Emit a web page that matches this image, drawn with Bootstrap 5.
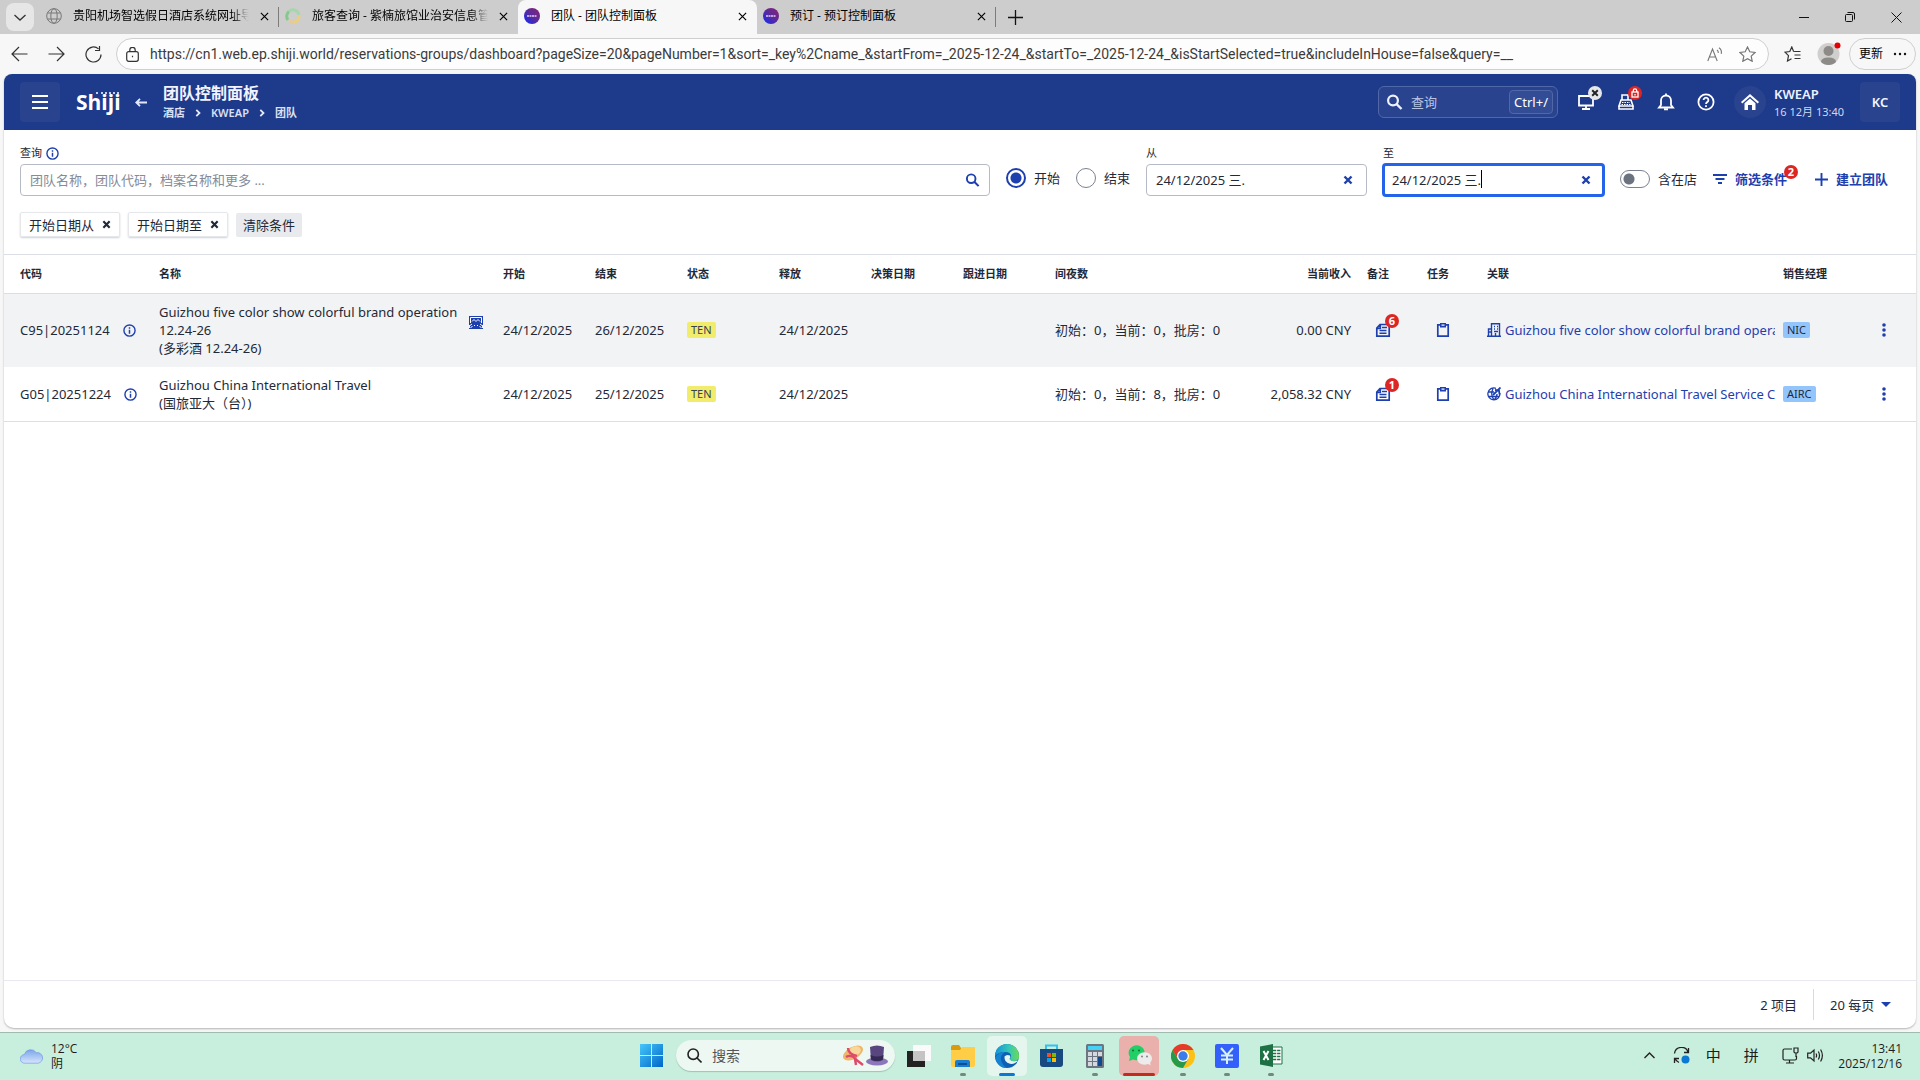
<!DOCTYPE html>
<html lang="zh-CN">
<head>
<meta charset="utf-8">
<meta name="viewport" content="width=device-width, initial-scale=1">
<title>团队 - 团队控制面板</title>
<link href="https://cdn.jsdelivr.net/npm/bootstrap@5.3.0/dist/css/bootstrap.min.css" rel="stylesheet">
<style>
:root{--navy:#1e3a8a;--blue:#1e40af;--ink:#1f2937;--line:#dcdee5;--alert:#dc2626}
body{font:13px/18px "Noto Sans","Noto Sans CJK SC",sans-serif;color:var(--ink);background:#f7f7f7}
button{font:inherit}
svg{display:block;flex:none}
.plain{background:none;border:0;padding:0;color:inherit}
.cjk{font-family:"Open Sans","Noto Sans CJK SC",sans-serif}

/* browser chrome */
.tabstrip{height:34px;background:#cdcdcd;font-size:12px;color:#000}
.tab-list-btn{width:28px;height:28px;border-radius:8px;background:#e6e6e6;margin:3px 6px 3px 6px}
.btab{width:239px;padding:0 10px 2px 6px;gap:11px;position:relative}
.btab.ruled::after{content:"";position:absolute;right:0;top:7px;height:20px;border-right:1px solid #7c7c7c}
.btab.current{background:#f7f7f7;border-radius:8px 8px 0 0}
.btab a{color:#000;text-decoration:none;overflow:hidden;white-space:nowrap}
.btab.faded a{-webkit-mask-image:linear-gradient(90deg,#000 90%,transparent);mask-image:linear-gradient(90deg,#000 90%,transparent)}
.winbtns{gap:36px;padding-right:18px}
.toolbar{height:40px;padding:4px 4px 4px 11px}
.navbtns{gap:20px;width:105px}
.address{height:32px;border:1px solid #cfcfcf;border-radius:16px;background:#fdfdfd;padding:0 8px 0 5px}
.address input{border:0;outline:0;background:none;color:#3b3b3b;font:14px/20px Roboto,"Noto Sans CJK SC",sans-serif;padding:0 0 0 11px}
.toolside{padding-left:15px}
.update{height:32px;width:67px;border:1px solid #cfcfcf;border-radius:16px;padding:0 8px 0 9px;font-size:12px;color:#000}

/* application */
.appframe{margin:0 4px 4px;border-radius:8px 8px 10px 10px;background:#fff;box-shadow:0 1px 2px #b4b4b4;overflow:hidden}
.topbar{height:56px;background:var(--navy);color:#eef2ff;padding:0 16px}
.sq{width:40px;height:40px;border-radius:4px;background:#29438f;border:0;color:#f3f5ff;font-weight:600}
.brand{font:700 21px/24px "Open Sans",sans-serif;color:#fff;text-decoration:none;margin-left:16px;width:59px;position:relative}
.brand::after{content:"";position:absolute;left:20px;top:2px;width:23px;border-top:2px dotted #c4cdea}
.page-title{font-size:16px;line-height:20px;font-weight:700;color:#f1f4ff;margin:0}
.crumbs{font-size:11px;line-height:16px;font-weight:600;gap:10px;margin-top:2px}
.crumbs a{color:#d9e0f5;text-decoration:none}
.quick{width:180px;height:32px;border:1px solid #5068a8;border-radius:6px;background:#29438f;padding:0 4px 0 7px;gap:8px}
.quick input{background:none;border:0;outline:0;color:#fff;min-width:0;padding:0}
.quick input::placeholder{color:#b9c4e2}
.quick kbd{font:inherit;background:#334c96;border:1px solid #5068a8;border-radius:4px;padding:2px 4px;line-height:18px}
.tools{gap:20px;margin-left:18px}
.tools button{width:20px;height:20px}
.pip{position:absolute;left:12px;top:-6px;width:14px;height:14px;border-radius:50%;background:var(--alert);color:#fff;font:700 11px/14px "Noto Sans",sans-serif;text-align:center}
.pip.grey{background:#e5e7eb;color:#222}
.pip.on-note{left:10px;top:-8px}
.pip.on-filter{left:71px;top:1px}
.house{width:32px;height:32px;border-radius:50%;background:#29438f;margin:0 8px 0 18px}
.site{width:86px;padding-top:2px}
.site-time{font-size:11px;line-height:18px;color:#cfd8f0}

.filters{padding:14px 16px 0;gap:16px}
.lbl{font-size:11px;line-height:18px;display:flex;align-items:center;gap:4px;margin:0 0 2px}
.field{height:32px;border:1px solid #b6bac5;border-radius:4px;padding:0 9px;background:#fff}
.field input{border:0;outline:0;background:none;min-width:0;padding:0;color:var(--ink)}
.field input::placeholder{color:#858b98}
.date .field{width:221px}
.date .field.active{border:3px solid #2563eb;margin:-1px;width:223px;height:34px;padding:0 7px}
.caret{position:absolute;left:96px;top:4px;height:18px;border-left:1px solid #000}
.ctl{height:32px;padding-bottom:2px}
.ctl .form-check-input{width:20px;height:20px;margin:0;border:1px solid #7b8190;background-image:none;box-shadow:none}
.ctl .form-check-input:checked{border:2px solid var(--blue);background:radial-gradient(circle,var(--blue) 5px,#fff 6px)}
.ctl .form-check-input[role=switch]{width:30px;height:18px;border-radius:9px;background:radial-gradient(circle at 8px 8px,#6b7280 5px,transparent 6px)}
.linkbtn{color:var(--blue);font-weight:600;gap:8px}
.create{margin:0 12px}
.chips{padding:16px;gap:8px;height:58px}
.chip{height:25px;border:1px solid #e6e7eb;box-shadow:0 1px 2px #cfd1d6;border-radius:2px;padding:0 8px;gap:8px}
.chip-clear{height:24px;background:#e8eaee;border:0;border-radius:2px;padding:0 7px;margin-top:1px;color:var(--ink)}

.groups{table-layout:fixed;width:100%;border-top:1px solid var(--line)}
.c-code{width:147px}.c-date{width:92px}.c-nights{width:182px}.c-rev{width:122px}.c-icon{width:60px}.c-rel{width:304px}.c-mgr{width:83px}.c-menu{width:58px}
.groups th{height:39px;font-size:11px;font-weight:600;padding:0 0 0 8px;border-bottom:1px solid var(--line);white-space:nowrap}
.groups td{padding:9px 0 9px 8px;vertical-align:middle}
.groups th:first-child,.groups td:first-child{padding-left:16px}
.groups th.wide,.groups td.wide{padding-left:16px}
.groups td.icon{padding-left:24px}
.groups th.num,.groups td.num{padding-right:0;text-align:right}
.groups .shade td{background:#f2f3f5}
.groups tbody tr:last-child td{border-bottom:1px solid var(--line)}
.groups tbody tr.shade td{padding-bottom:10px}
.groups a{color:var(--blue);text-decoration:none}
.icon a{display:block;position:relative;width:16px}
.code{gap:13px}
.tag{display:block;width:max-content;font-size:11px;line-height:16px;padding:0 4px;border-radius:2px;color:#374151;background:#f1ec6c}
.tag.sky{background:#93c5fd;color:#1f2937}
.flagcell{padding-right:12px}
.blue{color:var(--blue)}
.pager{height:48px;border-top:1px solid #e8e8ee;padding:0 25px 0 0}
.pager .rule{height:31px;border-left:1px solid #d8dae2;margin:0 16px}
.pager select{appearance:none;border:0;background:none;padding:0;color:var(--ink);width:51px}

/* desktop bar */
.taskbar{height:48px;background:#c8eedd;border-top:1px solid #9fbcb0;font-size:12px;line-height:15px;color:#1c1c1c;padding-bottom:2px}
.wing{flex:1 1 0}
.tsearch{width:219px;height:31px;border-radius:16px;background:#edf8f3;box-shadow:0 1px 1px #9ec4b3;padding:0 6px 0 11px;gap:10px;margin:0 0 0 1px}
.tsearch input{background:none;border:0;outline:0;font-size:14px;min-width:0;color:#444;padding:0}
.tsearch input::placeholder{color:#555}
.app{width:40px;height:40px;border-radius:5px;position:relative}
.app.on{background:#e4f6ee}
.app.call{background:#e9b0ac}
.app.run::after{content:"";position:absolute;bottom:0;left:17px;width:6px;height:3px;border-radius:2px;background:#73887f}
.app.on::after{left:12px;width:16px;background:#0a78d4}
.app.call::after{left:4px;width:32px;background:#c42b1c}
.tray{padding-right:18px;gap:14px}
.ime{font-size:15px;width:18px;text-align:center}
</style>
<script src="https://cdn.jsdelivr.net/npm/bootstrap@5.3.0/dist/js/bootstrap.bundle.min.js"></script>
</head>
<body class="d-flex flex-column vh-100 overflow-hidden">
<svg width="0" height="0" class="position-absolute" aria-hidden="true">
  <defs>
    <linearGradient id="fav" x1="0" y1="1" x2="1" y2="0"><stop offset="0" stop-color="#0b2bff"/><stop offset=".5" stop-color="#5a2a9c"/><stop offset="1" stop-color="#8a2270"/></linearGradient>
    <linearGradient id="win" x1="0" y1="0" x2="1" y2="1"><stop offset="0" stop-color="#45c6fb"/><stop offset="1" stop-color="#0067c8"/></linearGradient>
    <linearGradient id="cloud" x1="0" y1="0" x2="0" y2="1"><stop offset="0" stop-color="#7da5ea"/><stop offset="1" stop-color="#d6e5fc"/></linearGradient>
    <linearGradient id="edgeg" x1="0" y1="0" x2="1" y2="0"><stop offset="0" stop-color="#1593d8"/><stop offset=".6" stop-color="#36c9b4"/><stop offset="1" stop-color="#6ddb51"/></linearGradient>
    <symbol id="x" viewBox="0 0 10 10"><path d="M1 1l8 8M9 1L1 9" fill="none" stroke="currentColor" stroke-width="1.300"/></symbol>
    <symbol id="xb" viewBox="0 0 10 10"><path d="M1.500 1.500l7 7M8.500 1.500l-7 7" fill="none" stroke="currentColor" stroke-width="2.400"/></symbol>
    <symbol id="info" viewBox="0 0 14 14"><circle cx="7" cy="7" r="6" fill="none" stroke="currentColor" stroke-width="1.500"/><path d="M6.200 3.400h1.600v1.600H6.200zM6.200 6.100h1.600v4.500H6.200z" fill="currentColor"/></symbol>
    <symbol id="lens" viewBox="0 0 16 16"><circle cx="6.500" cy="6.500" r="4.900" fill="none" stroke="currentColor" stroke-width="2.200"/><path d="M10 10l5 5" stroke="currentColor" stroke-width="2.400"/></symbol>
    <symbol id="favicon" viewBox="0 0 16 16"><circle cx="8" cy="8" r="8" fill="url(#fav)"/><path d="M3 8h10" stroke="#e9c9ee" stroke-width="1.400" stroke-dasharray="2 .5"/></symbol>
    <symbol id="note" viewBox="0 0 16 16"><path d="M5 2.500h9.200v11.700H1.800V6zM5.300 2.500v3.800H1.800" fill="none" stroke="currentColor" stroke-width="1.700"/><path d="M7 5.500h5M4.500 8.500h7M4.500 11.300h7" stroke="currentColor" stroke-width="1.400"/></symbol>
    <symbol id="clip" viewBox="0 0 14 16"><path d="M1.800 2.800h10.400v11.400H1.800z" fill="none" stroke="currentColor" stroke-width="1.700"/><path d="M4 1h6v4.500H4z" fill="currentColor"/><path d="M5.500 2.500h3v1.200h-3z" fill="#fff"/></symbol>
    <symbol id="dots" viewBox="0 0 4 14"><g fill="currentColor"><circle cx="2" cy="2" r="1.800"/><circle cx="2" cy="7" r="1.800"/><circle cx="2" cy="12" r="1.800"/></g></symbol>
  </defs>
</svg>

<nav class="tabstrip d-flex flex-shrink-0 cjk" aria-label="tabs">
  <button class="plain tab-list-btn d-flex align-items-center justify-content-center" aria-label="tabs"><svg width="14" height="14" viewBox="0 0 14 14" fill="none" stroke="#333" stroke-width="1.300"><path d="M1.500 5L7 10l5.500-5"/></svg></button>
  <div class="btab ruled faded d-flex align-items-center">
    <svg width="16" height="16" viewBox="0 0 16 16" fill="none" stroke="#777"><circle cx="8" cy="8" r="7.300"/><ellipse cx="8" cy="8" rx="3.200" ry="7.300"/><path d="M1.500 5h13M1.500 11h13"/></svg>
    <a href="#" class="flex-grow-1">贵阳机场智选假日酒店系统网址导</a>
    <button class="plain" aria-label="close"><svg width="9" height="9"><use href="#x"/></svg></button>
  </div>
  <div class="btab faded d-flex align-items-center">
    <svg width="16" height="16" viewBox="0 0 16 16" fill="none" stroke-width="3"><path d="M3 12A6 6 0 0 1 4 3.500" stroke="#86c98b"/><path d="M4 3.500A6 6 0 0 1 14 7" stroke="#a5d6ae"/><path d="M14 7A6 6 0 0 1 9 14" stroke="#e9cf7e"/><path d="M9 14A6 6 0 0 1 4 12.500" stroke="#ecc898"/></svg>
    <a href="#" class="flex-grow-1">旅客查询 - 紫楠旅馆业治安信息管</a>
    <button class="plain" aria-label="close"><svg width="9" height="9"><use href="#x"/></svg></button>
  </div>
  <div class="btab current d-flex align-items-center">
    <svg width="16" height="16"><use href="#favicon"/></svg>
    <a href="#" class="flex-grow-1">团队 - 团队控制面板</a>
    <button class="plain" aria-label="close"><svg width="9" height="9"><use href="#x"/></svg></button>
  </div>
  <div class="btab ruled d-flex align-items-center">
    <svg width="16" height="16"><use href="#favicon"/></svg>
    <a href="#" class="flex-grow-1">预订 - 预订控制面板</a>
    <button class="plain" aria-label="close"><svg width="9" height="9"><use href="#x"/></svg></button>
  </div>
  <button class="plain px-2 ms-1" aria-label="new tab"><svg width="15" height="15" viewBox="0 0 15 15" stroke="#111" stroke-width="1.300"><path d="M7.500 0v15M0 7.500h15"/></svg></button>
  <div class="winbtns d-flex align-items-center ms-auto">
    <button class="plain" aria-label="minimize"><svg width="10" height="10" stroke="#111"><path d="M0 5.500h10"/></svg></button>
    <button class="plain" aria-label="restore"><svg width="10" height="10" viewBox="0 0 10 10" fill="none" stroke="#111"><rect x=".5" y="2.500" width="7" height="7" rx="1"/><path d="M2.500.5H8A1.500 1.500 0 0 1 9.500 2v5.500"/></svg></button>
    <button class="plain" aria-label="close"><svg width="11" height="11" viewBox="0 0 11 11" stroke="#111"><path d="M.5.500l10 10M10.500.500l-10 10"/></svg></button>
  </div>
</nav>

<div class="toolbar d-flex align-items-center flex-shrink-0">
  <div class="navbtns d-flex align-items-center flex-shrink-0">
    <button class="plain" aria-label="back"><svg width="17" height="16" viewBox="0 0 17 16" fill="none" stroke="#333" stroke-width="1.200"><path d="M16.500 8H1M8 1L1 8l7 7"/></svg></button>
    <button class="plain" aria-label="forward"><svg width="17" height="16" viewBox="0 0 17 16" fill="none" stroke="#333" stroke-width="1.200"><path d="M.5 8H16M9 1l7 7-7 7"/></svg></button>
    <button class="plain" aria-label="reload"><svg width="17" height="17" viewBox="0 0 17 17" fill="none" stroke="#333" stroke-width="1.200"><path d="M16 8.500a7.500 7.500 0 1 1-2.500-5.600M14.500 0v4.500H10"/></svg></button>
  </div>
  <div class="address d-flex align-items-center flex-grow-1">
    <svg class="ms-1" width="13" height="15" viewBox="0 0 13 15" fill="none" stroke="#333" stroke-width="1.200"><rect x=".7" y="4.700" width="11.600" height="9.600" rx="2"/><path d="M3.800 4.500V3a2.700 2.700 0 0 1 5.400 0v1.500M6.500 8.700v1.600"/></svg>
    <input class="flex-grow-1" aria-label="address" value="https://cn1.web.ep.shiji.world/reservations-groups/dashboard?pageSize=20&amp;pageNumber=1&amp;sort=_key%2Cname_&amp;startFrom=_2025-12-24_&amp;startTo=_2025-12-24_&amp;isStartSelected=true&amp;includeInHouse=false&amp;query=__">
    <button class="plain me-3" aria-label="read aloud"><svg width="16" height="15" viewBox="0 0 16 15" fill="none" stroke="#777" stroke-width="1.100"><path d="M.8 14L5.500 2l4.700 12M2.400 10h6.300M10 3q1.500 1 1.300 3M12 .8q3 2.200 2.300 6"/></svg></button>
    <button class="plain me-1" aria-label="favourite"><svg width="17" height="16" viewBox="0 0 17 16" fill="none" stroke="#777" stroke-width="1.200"><path d="M8.500 1l2.300 4.800 5.200.7-3.800 3.600 1 5.200-4.700-2.500-4.700 2.500 1-5.200L1 6.500l5.200-.7z"/></svg></button>
  </div>
  <div class="toolside d-flex align-items-center flex-shrink-0">
    <button class="plain me-3" aria-label="favourites"><svg width="17" height="16" viewBox="0 0 17 16" fill="none" stroke="#333" stroke-width="1.200"><path d="M11 5.500L9.500 5.300 7.800 1 5.800 5.500 1 6.200l3.500 3.500-1 5.300 4-2.300M11 5.500h5.500M10.500 9H16.500M10.500 12.500h6"/></svg></button>
    <button class="plain me-2" aria-label="profile"><svg width="24" height="24" viewBox="0 0 24 24"><circle cx="11.500" cy="12" r="11" fill="#d0cfcd"/><circle cx="11.500" cy="9" r="5" fill="#8d8b88"/><path d="M4 20q0-4.500 7.500-4.500T19 20q-3 3-7.500 3T4 20" fill="#8d8b88"/><circle cx="20.500" cy="3.500" r="3" fill="#e60000"/></svg></button>
    <button class="plain update d-flex align-items-center justify-content-between cjk">更新<svg width="14" height="4" viewBox="0 0 14 4" fill="#111"><circle cx="2" cy="2" r="1.200"/><circle cx="7" cy="2" r="1.200"/><circle cx="12" cy="2" r="1.200"/></svg></button>
  </div>
</div>

<div class="appframe d-flex flex-column flex-grow-1">
  <header class="topbar d-flex align-items-center flex-shrink-0">
    <button class="sq d-flex align-items-center justify-content-center" aria-label="menu"><svg width="16" height="14" viewBox="0 0 16 14" stroke="#fff" stroke-width="2"><path d="M0 1h16M0 7h16M0 13h16"/></svg></button>
    <a href="#" class="brand">Shiji</a>
    <button class="plain me-3" aria-label="back"><svg width="12" height="9" viewBox="0 0 12 9" fill="none" stroke="#e4e9fa" stroke-width="1.800"><path d="M12 4.500H1.500M5 .8L1.300 4.500 5 8.200"/></svg></button>
    <div>
      <h1 class="page-title">团队控制面板</h1>
      <nav class="crumbs d-flex align-items-center">
        <a href="#">酒店</a><svg width="6" height="8" viewBox="0 0 5 8" fill="none" stroke="#e4e9fa" stroke-width="1.800"><path d="M.8.800L4 4 .8 7.200"/></svg>
        <a href="#">KWEAP</a><svg width="6" height="8" viewBox="0 0 5 8" fill="none" stroke="#e4e9fa" stroke-width="1.800"><path d="M.8.800L4 4 .8 7.200"/></svg>
        <a href="#">团队</a>
      </nav>
    </div>
    <div class="quick d-flex align-items-center ms-auto">
      <svg width="17" height="16"><use href="#lens"/></svg>
      <input class="flex-grow-1" aria-label="查询" placeholder="查询"><kbd>Ctrl+/</kbd>
    </div>
    <div class="tools d-flex align-items-center">
      <button class="plain position-relative" aria-label="terminal"><svg width="20" height="20" viewBox="0 0 20 20" fill="none" stroke="#fff" stroke-width="1.800"><path d="M3 4h14v9.500H3zM10 13.500V17M6 17h8"/></svg><span class="pip grey d-flex align-items-center justify-content-center"><svg width="8" height="8"><use href="#xb"/></svg></span></button>
      <button class="plain position-relative" aria-label="cashier"><svg width="20" height="20" viewBox="0 0 20 20" fill="none" stroke="#fff" stroke-width="1.600"><path d="M5 8h10l2 6H3zM6 8V3h6v5M3 14h14v3H3z"/><path d="M6 10.500h8M5.500 12.500h9" stroke-width="1.200" stroke-dasharray="1.500 1"/></svg><span class="pip d-flex align-items-center justify-content-center"><svg width="8" height="10" viewBox="0 0 8 10" fill="none" stroke="#fff" stroke-width="1.300"><rect x="1" y="4" width="6" height="5"/><path d="M2.300 4V2.500a1.700 1.700 0 0 1 3.400 0V4M4 6v1.500"/></svg></span></button>
      <button class="plain" aria-label="notifications"><svg width="20" height="20" viewBox="0 0 20 20" fill="none" stroke="#fff" stroke-width="1.800"><path d="M3 15.500h14L15 13V8.500a5 5 0 0 0-10 0V13zM10 1.500V4"/><path d="M8 17.300h4" stroke-width="2"/></svg></button>
      <button class="plain" aria-label="help"><svg width="20" height="20" viewBox="0 0 20 20" fill="none" stroke="#fff" stroke-width="1.800"><circle cx="10" cy="10" r="7.600"/><path d="M7.600 8a2.400 2.400 0 1 1 3.600 2.100Q10 10.800 10 12"/><path d="M10 13.200V15"/></svg></button>
    </div>
    <div class="house d-flex align-items-center justify-content-center"><svg width="18" height="17" viewBox="0 0 18 17" fill="#fff"><path d="M9 0l9 8-1.300 1.500L9 2.800 1.300 9.500 0 8zM3.500 9.300L9 4.500l5.500 4.800V16H11v-5H7v5H3.500z"/></svg></div>
    <div class="site"><div class="fw-semibold">KWEAP</div><div class="site-time">16 12月 13:40</div></div>
    <button class="sq">KC</button>
  </header>

  <form class="filters d-flex align-items-end flex-shrink-0">
    <div class="flex-grow-1">
      <label class="lbl" for="q">查询 <svg class="blue" width="13" height="13"><use href="#info"/></svg></label>
      <div class="field d-flex align-items-center"><input id="q" class="flex-grow-1" placeholder="团队名称，团队代码，档案名称和更多 ..."><svg class="blue" width="15" height="14"><use href="#lens"/></svg></div>
    </div>
    <div class="ctl d-flex align-items-center gap-2 pb-1"><input class="form-check-input" type="radio" name="edge" id="r1" checked><label for="r1">开始</label>
      <input class="form-check-input ms-2" type="radio" name="edge" id="r2"><label for="r2">结束</label></div>
    <div class="date"><label class="lbl" for="d1">从</label>
      <div class="field d-flex align-items-center"><input id="d1" class="flex-grow-1" value="24/12/2025 三."><svg class="blue me-1" width="10" height="10"><use href="#xb"/></svg></div></div>
    <div class="date"><label class="lbl" for="d2">至</label>
      <div class="field active d-flex align-items-center position-relative"><input id="d2" class="flex-grow-1" value="24/12/2025 三."><span class="caret"></span><svg class="blue me-1" width="10" height="10"><use href="#xb"/></svg></div></div>
    <div class="ctl d-flex align-items-center gap-2"><input class="form-check-input" type="checkbox" role="switch" id="s1"><label for="s1">含在店</label></div>
    <button type="button" class="plain ctl linkbtn d-flex align-items-center position-relative"><svg width="14" height="10" viewBox="0 0 14 10" stroke="currentColor" stroke-width="1.800"><path d="M0 1h14M2.500 5h9M5 9h4"/></svg>筛选条件<span class="pip on-filter">2</span></button>
    <button type="button" class="plain ctl linkbtn create d-flex align-items-center"><svg width="13" height="13" viewBox="0 0 13 13" stroke="currentColor" stroke-width="1.900"><path d="M6.500 0v13M0 6.500h13"/></svg>建立团队</button>
  </form>
  <div class="chips d-flex flex-shrink-0">
    <button class="plain chip d-flex align-items-center">开始日期从<svg width="9" height="9"><use href="#xb"/></svg></button>
    <button class="plain chip d-flex align-items-center">开始日期至<svg width="9" height="9"><use href="#xb"/></svg></button>
    <button class="chip-clear">清除条件</button>
  </div>

  <main class="flex-grow-1">
    <table class="groups">
      <colgroup><col class="c-code"><col><col class="c-date" span="6"><col class="c-nights"><col class="c-rev"><col class="c-icon" span="2"><col class="c-rel"><col class="c-mgr"><col class="c-menu"></colgroup>
      <thead><tr><th>代码</th><th>名称</th><th>开始</th><th>结束</th><th>状态</th><th>释放</th><th>决策日期</th><th>跟进日期</th><th>间夜数</th><th class="num">当前收入</th><th class="wide">备注</th><th class="wide">任务</th><th class="wide">关联</th><th>销售经理</th><th></th></tr></thead>
      <tbody>
        <tr class="shade">
          <td><div class="code d-flex align-items-center">C95|20251124 <svg class="blue" width="13" height="13"><use href="#info"/></svg></div></td>
          <td><div class="d-flex align-items-center justify-content-between flagcell"><div>Guizhou five color show colorful brand operation 12.24-26<br>(多彩酒 12.24-26)</div><svg class="blue mb-3" width="14" height="13" viewBox="0 0 14 13"><path d="M0 0h14v9h-1v3h1v1H0v-1h1V9H0z" fill="currentColor"/><path d="M1.500 7V1.500h11V7M3 5.500l2-2 2 2 2-2 2 2" stroke="#fff" fill="none"/><path d="M1 9.500l2-1.500M13 9.500L11 8M1.500 12l2-2M12.500 12l-2-2M5.500 9v1M8.500 9v1" stroke="#fff"/></svg></div></td>
          <td>24/12/2025</td><td>26/12/2025</td><td><span class="tag">TEN</span></td><td>24/12/2025</td><td></td><td></td><td>初始：0，当前：0，批房：0</td><td class="num">0.00 CNY</td>
          <td class="icon"><a href="#" aria-label="备注 6"><svg width="16" height="16"><use href="#note"/></svg><span class="pip on-note">6</span></a></td>
          <td class="icon"><a href="#" aria-label="任务"><svg width="16" height="16"><use href="#clip"/></svg></a></td>
          <td class="wide"><a href="#" class="d-flex align-items-center gap-1"><svg width="14" height="14" viewBox="0 0 14 14" fill="none" stroke="currentColor" stroke-width="1.400"><path d="M0 13.300h14M1.500 13V6H4M4.500 13V.7h8V13M7 3.500h1M10 3.500h1M7 6h1M10 6h1M7 8.500h4M8.500 13v-3M2 9h2"/></svg><span class="text-nowrap overflow-hidden">Guizhou five color show colorful brand opera</span></a></td>
          <td><span class="tag sky">NIC</span></td><td><button class="plain blue px-3 d-block" aria-label="more"><svg width="4" height="14"><use href="#dots"/></svg></button></td>
        </tr>
        <tr>
          <td><div class="code d-flex align-items-center">G05|20251224 <svg class="blue" width="13" height="13"><use href="#info"/></svg></div></td>
          <td>Guizhou China International Travel<br>(国旅亚大（台）)</td>
          <td>24/12/2025</td><td>25/12/2025</td><td><span class="tag">TEN</span></td><td>24/12/2025</td><td></td><td></td><td>初始：0，当前：8，批房：0</td><td class="num">2,058.32 CNY</td>
          <td class="icon"><a href="#" aria-label="备注 1"><svg width="16" height="16"><use href="#note"/></svg><span class="pip on-note">1</span></a></td>
          <td class="icon"><a href="#" aria-label="任务"><svg width="16" height="16"><use href="#clip"/></svg></a></td>
          <td class="wide"><a href="#" class="d-flex align-items-center gap-1"><svg width="14" height="14" viewBox="0 0 14 14" fill="none" stroke="currentColor" stroke-width="1.300"><path d="M9 1.300A6 6 0 1 0 12.800 6M1 5h6M1.500 9.500h10M7 13Q3 8 6 1.500M7 13q3-2.500 3-6"/><path d="M6 8l7.500-7.500M8 3l4 .5.500 4" stroke-width="1.800"/></svg><span class="text-nowrap overflow-hidden">Guizhou China International Travel Service Co</span></a></td>
          <td><span class="tag sky">AIRC</span></td><td><button class="plain blue px-3 d-block" aria-label="more"><svg width="4" height="14"><use href="#dots"/></svg></button></td>
        </tr>
      </tbody>
    </table>
  </main>

  <footer class="pager d-flex align-items-center justify-content-end flex-shrink-0">
    <span>2 项目</span><span class="rule"></span>
    <select aria-label="每页"><option>20 每页</option><option>50 每页</option></select>
    <svg width="10" height="5" viewBox="0 0 10 5"><path d="M0 0h10L5 5z" fill="#1e40af"/></svg>
  </footer>
</div>

<div class="taskbar d-flex align-items-center flex-shrink-0 cjk">
  <div class="wing d-flex align-items-center ps-3">
    <svg class="ms-1 me-2" width="23" height="16" viewBox="0 0 24 16"><path d="M5 15.500A4.500 4.500 0 0 1 4.500 6.500 7 7 0 0 1 17 4.500a5.500 5.500 0 0 1 2 11z" fill="url(#cloud)" stroke="#6d97e6" stroke-width=".7"/></svg>
    <div>12°C<br>阴</div>
  </div>
  <div class="d-flex align-items-center gap-1 ms-1">
    <button class="plain app d-flex align-items-center justify-content-center" aria-label="start"><svg width="23" height="23" viewBox="0 0 23 23" fill="url(#win)"><path d="M0 0h11v11H0zM12 0h11v11H12zM0 12h11v11H0zM12 12h11v11H12z"/></svg></button>
    <div class="tsearch d-flex align-items-center">
      <svg width="15" height="15" viewBox="0 0 15 15" fill="none" stroke="#222" stroke-width="1.600"><circle cx="6.200" cy="6.200" r="5.200"/><path d="M10 10l4.500 4.500"/></svg>
      <input class="flex-grow-1" aria-label="搜索" placeholder="搜索">
      <svg width="48" height="24" viewBox="0 0 48 24"><ellipse cx="12" cy="9" rx="11" ry="6" fill="#eeb669" transform="rotate(-30 12 9)"/><ellipse cx="14" cy="7" rx="6" ry="4.500" fill="#f8d79c" transform="rotate(-20 14 7)"/><path d="M7 4q0 6 9 8M5 13q5-3 10 2M13 14l9 7M14 15l1 6" stroke="#e04a6a" stroke-width="2.400" fill="none"/><ellipse cx="36" cy="17.500" rx="11" ry="4" fill="#8d77bb"/><path d="M29 3q7-3 14 0l-1 13q-6 3-12 0z" fill="#58467f"/><path d="M29.500 11q6.500 3 13 0l-.5 4.500q-6 3-12 0z" fill="#352a55"/></svg>
    </div>
    <button class="plain app d-flex align-items-center justify-content-center" aria-label="task view"><svg width="24" height="22" viewBox="0 0 24 22"><path d="M0 6h18v16H0z" fill="#222"/><path d="M6 0h18v16H6z" fill="#fafafa"/><path d="M6 6h12v10H6z" fill="#c4c4c4"/></svg></button>
    <button class="plain app run d-flex align-items-center justify-content-center" aria-label="files"><svg width="24" height="22" viewBox="0 0 24 22"><path d="M0 2q0-2 2-2h6l2 3v4H0z" fill="#d99a0e"/><path d="M0 5h9l2-3h13v18q0 2-2 2H2q-2 0-2-2z" fill="#ffce46"/><path d="M4 22v-5q0-2 2-2h11q2 0 2 2v5z" fill="#1a7ed0"/><path d="M7 19h9" stroke="#0b4f96" stroke-width="2"/></svg></button>
    <button class="plain app run on d-flex align-items-center justify-content-center" aria-label="edge"><svg width="24" height="24" viewBox="0 0 24 24"><circle cx="12" cy="12" r="12" fill="#0f60b4"/><path d="M0 12A12 12 0 0 1 24 12q0 5-5 5-4 0-4-2 1-1 1-3 0-4-6-4Q3 8 0 12" fill="url(#edgeg)"/><path d="M10 8q-5 3-4 8t6 8q-9 0-12-10Q3 7.500 10 8" fill="#1583d3"/><path d="M9.500 12.500q2-2.500 5.500-1 1 2-.5 3.500 2 3.500 8.500 1.500-3 4-8 3.300Q9 18.500 9.500 12.500" fill="#e4f6ee"/></svg></button>
    <button class="plain app d-flex align-items-center justify-content-center" aria-label="store"><svg width="23" height="23" viewBox="0 0 23 23"><path d="M6 6V1.500h11V6" fill="none" stroke="#35c0ef" stroke-width="2"/><path d="M0 5h23v15q0 3-3 3H3q-3 0-3-3z" fill="#164a80"/><path d="M7 9h4v4H7z" fill="#f25022"/><path d="M12 9h4v4h-4z" fill="#7fba00"/><path d="M7 14h4v4H7z" fill="#00a4ef"/><path d="M12 14h4v4h-4z" fill="#ffb900"/></svg></button>
    <button class="plain app run d-flex align-items-center justify-content-center" aria-label="calculator"><svg width="18" height="24" viewBox="0 0 18 24"><rect width="18" height="24" rx="1.500" fill="#6c7580"/><path d="M2 2h14v4H2z" fill="#43d2f5"/><path d="M2 8h4v4H2zM7 8h4v4H7zM12 8h4v4h-4zM2 13h4v4H2zM7 13h4v4H7zM2 18h4v4H2zM7 18h4v4H7z" fill="#d4d9df"/><path d="M12 13h4v9h-4z" fill="#12488c"/></svg></button>
    <button class="plain app run call d-flex align-items-center justify-content-center" aria-label="wechat"><svg width="25" height="21" viewBox="0 0 25 21"><path d="M2 16l1-4A8 7.500 0 1 1 6 14.500z" fill="#22cf67"/><circle cx="6" cy="5.500" r="1" fill="#136c38"/><circle cx="12" cy="5.500" r="1" fill="#136c38"/><ellipse cx="17.500" cy="13.500" rx="7.500" ry="6.200" fill="#ececec"/><path d="M20 18l3.500 2.500-.5-4.500z" fill="#ececec"/><circle cx="15" cy="11.500" r=".9" fill="#777"/><circle cx="20" cy="11.500" r=".9" fill="#777"/></svg></button>
    <button class="plain app run d-flex align-items-center justify-content-center" aria-label="chrome"><svg width="24" height="24" viewBox="0 0 24 24"><circle cx="12" cy="12" r="12" fill="#fbc116"/><path d="M1.600 6A12 12 0 0 1 22.400 6H12l-5 9z" fill="#e33b2e"/><path d="M1.600 6A12 12 0 0 0 12 24l5.200-9L7 15z" fill="#269a48"/><circle cx="12" cy="12" r="6" fill="#fff"/><circle cx="12" cy="12" r="4.700" fill="#3a7de8"/></svg></button>
    <button class="plain app run d-flex align-items-center justify-content-center" aria-label="finance"><svg width="24" height="24" viewBox="0 0 24 24"><rect width="24" height="24" rx="2" fill="#3360fa"/><path d="M6 4l6 7 6-7M6 11.500h12M6 15.500h12M12 11v9" fill="none" stroke="#d7f0f5" stroke-width="2"/></svg></button>
    <button class="plain app run d-flex align-items-center justify-content-center" aria-label="excel"><svg width="23" height="23" viewBox="0 0 23 23"><path d="M11 3h11v17H11z" fill="#fff" stroke="#1e7145"/><path d="M13 6.500h7.500M13 9.500h7.500M13 12.500h7.500M13 15.500h7.500" stroke="#1e7145" stroke-width="1.500" stroke-dasharray="3.300 .8"/><path d="M0 2.500L13 0v23L0 20.500z" fill="#1e7145"/><path d="M3.500 7l5 9M8.500 7l-5 9" stroke="#fff" stroke-width="2"/></svg></button>
  </div>
  <div class="wing tray d-flex align-items-center justify-content-end">
    <svg class="me-1" width="11" height="7" viewBox="0 0 11 7" fill="none" stroke="#222" stroke-width="1.400"><path d="M.5 6l5-5 5 5"/></svg>
    <svg width="17" height="17" viewBox="0 0 17 17" fill="none" stroke="#222" stroke-width="1.300"><path d="M1.500 6.500A7 7 0 0 1 15 5M15.500 1v4.500H11M6 15.500a7 7 0 0 1-4-4M1.500 16v-4.500H6"/><circle cx="12.500" cy="12.500" r="4" fill="#0a78d4" stroke="none"/></svg>
    <div class="d-flex gap-3 pe-2"><span class="ime me-1">中</span><span class="ime">拼</span></div>
    <div class="d-flex gap-2 align-items-center">
      <svg width="17" height="17" viewBox="0 0 17 17" fill="none" stroke="#222" stroke-width="1.200"><path d="M10 2H2.500Q1 2 1 3.500v8Q1 13 2.500 13H13q1.500 0 1.500-1.500V9M4 16h8M7.500 13v3"/><path d="M12 1h4v4q0 1-2 1t-2-1zM14 6v4"/></svg>
      <svg width="17" height="15" viewBox="0 0 17 15" fill="none" stroke="#222" stroke-width="1.200"><path d="M.7 5.200h2.800L7 2v11L3.500 9.800H.7zM9 5.500q1.200 2 0 4M11.300 3.500q2.400 4 0 8M13.600 1.500q3.600 6 0 12"/></svg>
    </div>
    <div class="text-end">13:41<br>2025/12/16</div>
  </div>
</div>
</body>
</html>
